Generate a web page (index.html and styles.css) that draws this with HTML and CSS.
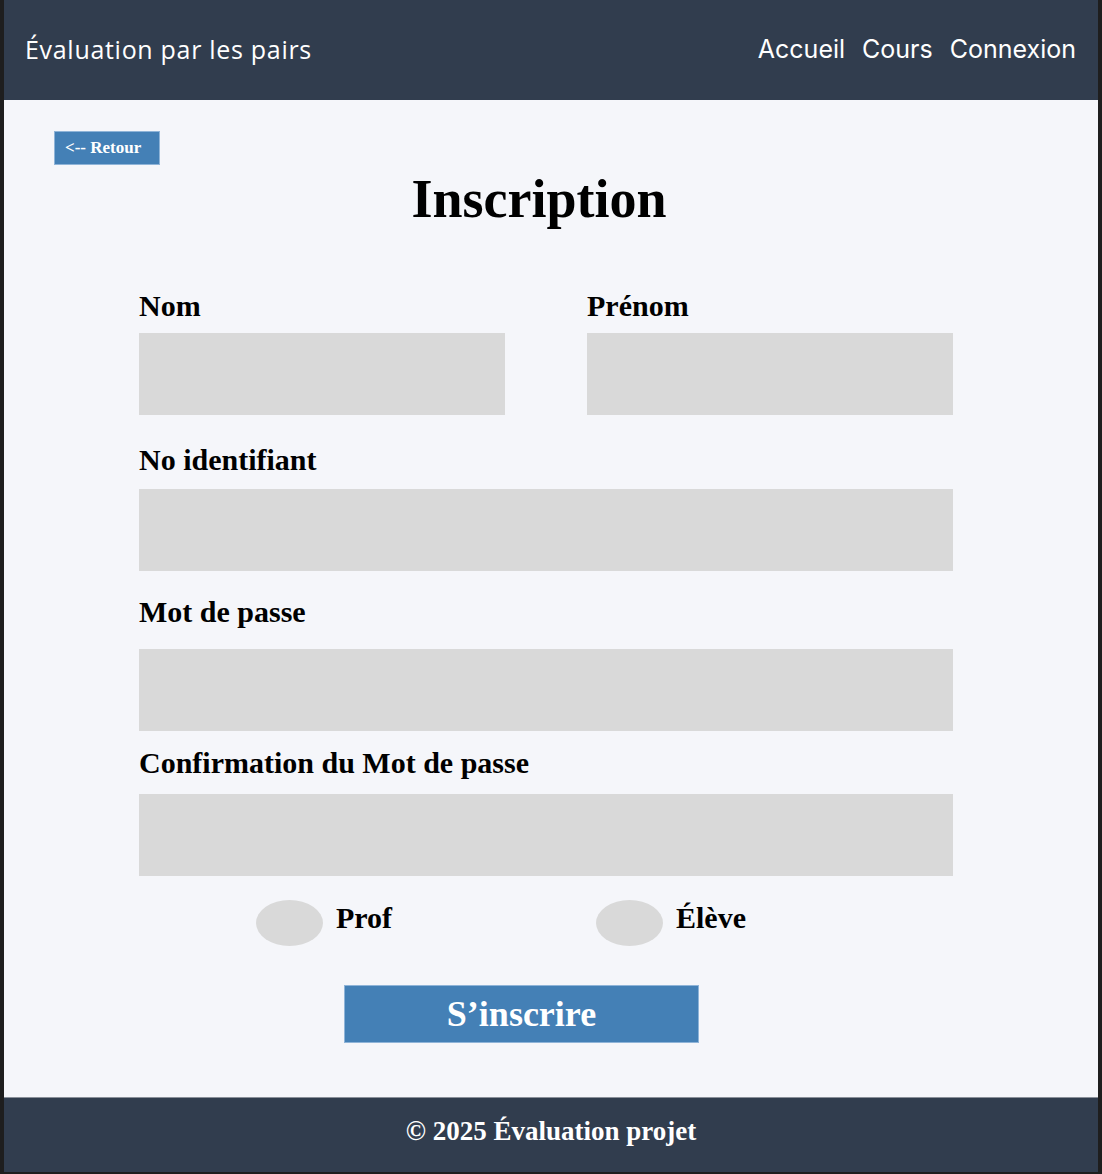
FILE: index.html
```html
<!DOCTYPE html>
<html lang="fr">
<head>
<meta charset="utf-8">
<title>Inscription</title>
<link rel="stylesheet" href="styles.css">
</head>
<body>
<div class="page">
  <header class="topbar">
    <div class="brand">Évaluation par les pairs</div>
    <nav class="nav">
      <a href="#">Accueil</a>
      <a href="#">Cours</a>
      <a href="#">Connexion</a>
    </nav>
  </header>
  <main class="main">
    <a href="#" class="back">&lt;-- Retour</a>
    <form class="form">
      <h1 class="title">Inscription</h1>
      <div class="row">
        <div class="field">
          <label class="label">Nom</label>
          <input class="input" type="text">
        </div>
        <div class="field">
          <label class="label">Prénom</label>
          <input class="input" type="text">
        </div>
      </div>
      <div class="field field-id">
        <label class="label">No identifiant</label>
        <input class="input" type="text">
      </div>
      <div class="field field-pw">
        <label class="label">Mot de passe</label>
        <input class="input" type="password">
      </div>
      <div class="field field-confirm">
        <label class="label">Confirmation du Mot de passe</label>
        <input class="input" type="password">
      </div>
      <div class="roles">
        <label class="role role-prof"><input class="radio" type="radio" name="role"><span class="role-text">Prof</span></label>
        <label class="role"><input class="radio" type="radio" name="role"><span class="role-text">Élève</span></label>
      </div>
      <button type="button" class="submit">S’inscrire</button>
    </form>
  </main>
  <footer class="footer">© 2025 Évaluation projet</footer>
</div>
</body>
</html>
```

FILE: styles.css
```css
html, body {
  margin: 0;
  padding: 0;
}
body {
  background: #1e1e1e;
  font-family: "Liberation Serif", "Times New Roman", serif;
}
.page {
  margin: 0 4px 2px 4px;
  background: #f5f6fa;
}
.topbar {
  height: 100px;
  background: #313d4e;
  display: flex;
  align-items: center;
  justify-content: space-between;
  padding: 0 22px 0 21px;
  box-sizing: border-box;
  color: #ffffff;
}
.brand {
  font-family: "Open Sans", "Noto Sans", sans-serif;
  font-size: 25px;
  letter-spacing: 0.7px;
  line-height: 30px;
  margin-top: -2px;
}
.nav {
  display: flex;
  gap: 17px;
  font-family: Inter, "Noto Sans", sans-serif;
  font-size: 25px;
  line-height: 30px;
  margin-top: -2px;
}
.nav a {
  color: #ffffff;
  text-decoration: none;
}
.main {
  padding: 31px 0 54px 50px;
  display: flex;
  flex-direction: column;
  align-items: flex-start;
}
.back {
  display: block;
  width: 106px;
  height: 34px;
  box-sizing: border-box;
  padding-left: 10px;
  background: #4480b6;
  border: 1px solid #8fb4d8;
  color: #ffffff;
  font-weight: bold;
  font-size: 17px;
  line-height: 31px;
  text-decoration: none;
}
.form {
  width: 814px;
  margin: 4px 0 0 85px;
  display: flex;
  flex-direction: column;
}
.title {
  margin: 0 0 59px 0;
  padding-right: 14px;
  font-size: 54px;
  line-height: 60px;
  text-align: center;
  font-weight: bold;
  color: #000000;
}
.row {
  display: grid;
  grid-template-columns: 366px 366px;
  column-gap: 82px;
}
.field {
  display: flex;
  flex-direction: column;
}
.label {
  font-size: 30px;
  line-height: 36px;
  font-weight: bold;
  color: #000000;
  margin-bottom: 9px;
}
.input {
  display: block;
  width: 100%;
  height: 82px;
  box-sizing: border-box;
  border: none;
  background: #d9d9d9;
  margin: 0;
  padding: 0 12px;
  font-size: 20px;
}
.field-id { margin-top: 27px; }
.field-id .label { margin-bottom: 11px; }
.field-pw { margin-top: 23px; }
.field-pw .label { margin-bottom: 19px; }
.field-confirm { margin-top: 14px; }
.field-confirm .label { margin-bottom: 13px; }
.roles {
  margin-top: 24px;
  padding-left: 117px;
  display: flex;
  height: 46px;
}
.role {
  display: flex;
  align-items: center;
  gap: 13px;
}
.role-prof {
  width: 340px;
}
.radio {
  appearance: none;
  -webkit-appearance: none;
  margin: 0;
  width: 67px;
  height: 46px;
  border-radius: 50%;
  background: #d9d9d9;
  border: none;
}
.role-text {
  font-size: 30px;
  line-height: 36px;
  font-weight: bold;
  color: #000000;
  margin-bottom: 10px;
}
.submit {
  margin: 39px 0 0 205px;
  width: 355px;
  height: 58px;
  background: #4480b6;
  border: 1px solid #8fb4d8;
  color: #ffffff;
  font-family: "Liberation Serif", "Times New Roman", serif;
  font-weight: bold;
  font-size: 36px;
  line-height: 50px;
  padding: 0;
}
.footer {
  background: #313d4e;
  border-top: 1px solid #8a9099;
  height: 75px;
  box-sizing: border-box;
  padding-top: 18px;
  text-align: center;
  color: #ffffff;
  font-weight: bold;
  font-size: 27px;
  line-height: 30px;
}
```
